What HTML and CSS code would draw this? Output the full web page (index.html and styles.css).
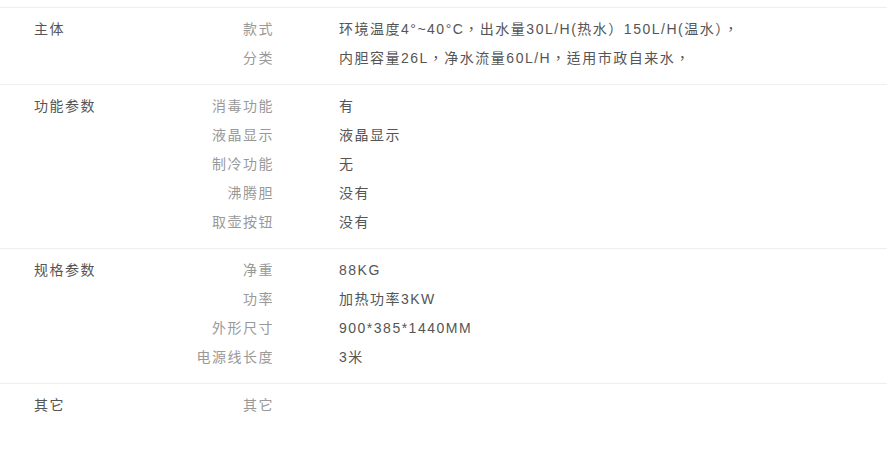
FILE: index.html
```html
<!DOCTYPE html>
<html lang="zh-CN">
<head>
<meta charset="utf-8">
<link rel="stylesheet" href="styles.css">
</head>
<body>
<div class="spec">
  <div class="group">
    <div class="gtitle">主体</div>
    <dl class="items">
      <div class="row"><dt>款式</dt><dd lang="zh-TW" class="tc">环境温度4°~40°C，出水量30L/H(热水）150L/H(温水），</dd></div>
      <div class="row"><dt>分类</dt><dd lang="zh-TW" class="tc">内胆容量26L，净水流量60L/H，适用市政自来水，</dd></div>
    </dl>
  </div>
  <div class="group">
    <div class="gtitle">功能参数</div>
    <dl class="items">
      <div class="row"><dt>消毒功能</dt><dd>有</dd></div>
      <div class="row"><dt>液晶显示</dt><dd>液晶显示</dd></div>
      <div class="row"><dt>制冷功能</dt><dd>无</dd></div>
      <div class="row"><dt>沸腾胆</dt><dd>没有</dd></div>
      <div class="row"><dt>取壶按钮</dt><dd>没有</dd></div>
    </dl>
  </div>
  <div class="group">
    <div class="gtitle">规格参数</div>
    <dl class="items">
      <div class="row"><dt>净重</dt><dd>88KG</dd></div>
      <div class="row"><dt>功率</dt><dd>加热功率3KW</dd></div>
      <div class="row"><dt>外形尺寸</dt><dd>900*385*1440MM</dd></div>
      <div class="row"><dt>电源线长度</dt><dd>3米</dd></div>
    </dl>
  </div>
  <div class="group">
    <div class="gtitle">其它</div>
    <dl class="items">
      <div class="row"><dt>其它</dt><dd></dd></div>
    </dl>
  </div>
</div>
</body>
</html>
```
FILE: styles.css
```css
html, body {
  margin: 0;
  padding: 0;
  background: #fff;
}
body {
  font-family: "Liberation Sans", "Noto Sans CJK SC", sans-serif;
  font-size: 14px;
  letter-spacing: 1.5px;
  color: #555;
}
.spec {
  padding-top: 7px;
}
.group {
  display: flex;
  border-top: 1px solid #eee;
  padding: 7px 0 11px 34px;
}
.gtitle {
  width: 110px;
  line-height: 29px;
  color: #555;
}
.items {
  margin: 0;
  flex: 1;
}
.row {
  display: flex;
  line-height: 29px;
}
.row dt {
  width: 130px;
  text-align: right;
  color: #999;
}
.row dd {
  margin: 0 0 0 65px;
  color: #555;
}
.row dd.tc {
  font-family: "Liberation Sans", "Noto Sans CJK TC", sans-serif;
}
```
